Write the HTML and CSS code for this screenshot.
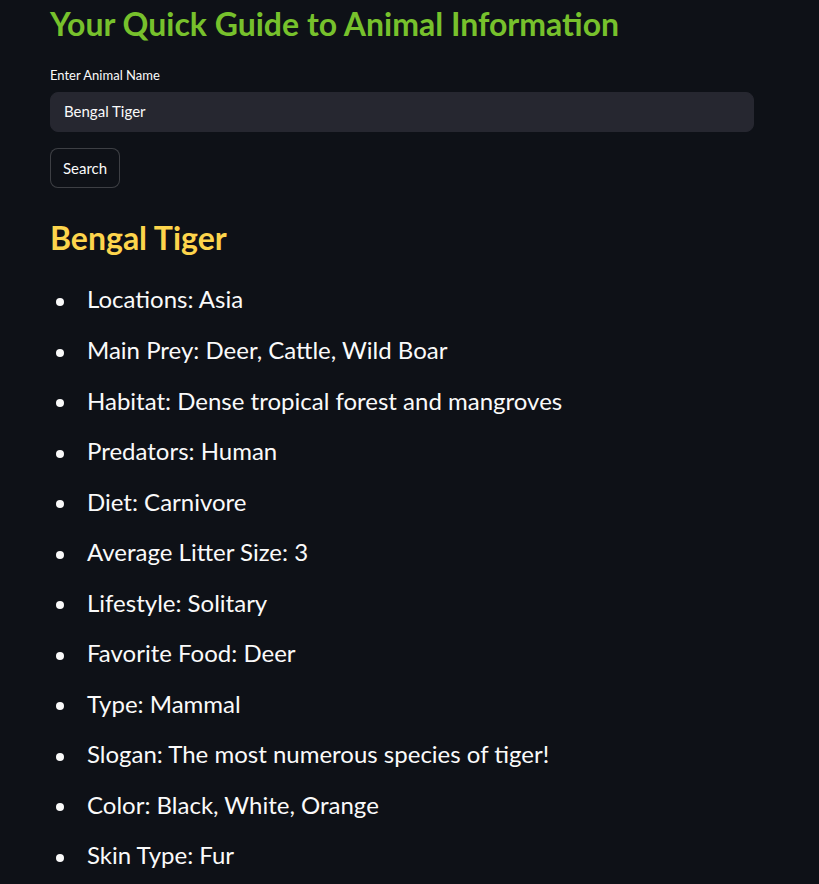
FILE: index.html
```html
<!DOCTYPE html>
<html lang="en">
<head>
<meta charset="utf-8">
<title>Animal Information</title>
<link rel="stylesheet" href="styles.css">
</head>
<body>
<main class="main">
  <h1 class="title">Your Quick Guide to Animal Information</h1>
  <label class="field-label" for="animal">Enter Animal Name</label>
  <input class="text-input" id="animal" type="text" value="Bengal Tiger">
  <button class="btn" type="button">Search</button>
  <h2 class="animal-name">Bengal Tiger</h2>
  <ul class="facts">
    <li>Locations: Asia</li>
    <li>Main Prey: Deer, Cattle, Wild Boar</li>
    <li>Habitat: Dense tropical forest and mangroves</li>
    <li>Predators: Human</li>
    <li>Diet: Carnivore</li>
    <li>Average Litter Size: 3</li>
    <li>Lifestyle: Solitary</li>
    <li>Favorite Food: Deer</li>
    <li>Type: Mammal</li>
    <li>Slogan: The most numerous species of tiger!</li>
    <li>Color: Black, White, Orange</li>
    <li>Skin Type: Fur</li>
  </ul>
</main>
</body>
</html>
```
FILE: styles.css
```css
html, body {
  margin: 0;
  background: #0e1117;
  color: #fafafa;
  font-family: Lato, "Noto Sans", sans-serif;
}

.main {
  width: 704px;
  padding: 5.4px 0 0 50px;
  display: flex;
  flex-direction: column;
  align-items: flex-start;
}

.title {
  margin: 0;
  font-size: 32px;
  line-height: 38.4px;
  font-weight: 700;
  color: #77c12c;
}

.field-label {
  margin-top: 24.2px;
  font-size: 13px;
  line-height: 15.6px;
  color: #fafafa;
}

.text-input {
  box-sizing: border-box;
  margin-top: 8.4px;
  width: 704px;
  height: 40px;
  padding: 0 13px 2px;
  border: 1px solid #262730;
  border-radius: 8px;
  background: #262730;
  color: #fafafa;
  font-family: inherit;
  font-size: 15px;
  outline: none;
}

.btn {
  box-sizing: border-box;
  margin-top: 16px;
  height: 40px;
  padding: 0 12px;
  border: 1px solid rgba(250, 250, 250, 0.2);
  border-radius: 8px;
  background: #0e1117;
  color: #fafafa;
  font-family: inherit;
  font-size: 15px;
}

.animal-name {
  margin: 31.4px 0 0;
  font-size: 32px;
  line-height: 38.4px;
  font-weight: 700;
  color: #fdd54c;
}

.facts {
  list-style: none;
  margin: 22.7px 0 0;
  padding: 0;
}

.facts li {
  display: flex;
  font-size: 24px;
  line-height: 38.4px;
  margin-bottom: 12.15px;
}

.facts li::before {
  content: "";
  flex: none;
  width: 8px;
  height: 8px;
  border-radius: 50%;
  background: #fafafa;
  margin: 17.5px 23px 0 6px;
}
```
